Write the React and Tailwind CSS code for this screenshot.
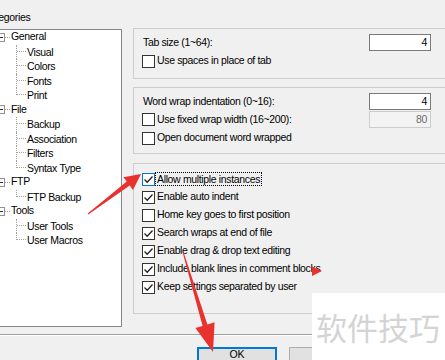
const font = { fontFamily: '"Liberation Sans", Arial, sans-serif' }

function Check({ checked, hot }) {
  return (
    <span className={`w-[13px] h-[13px] shrink-0 bg-white border ${hot ? 'border-[#0078d7]' : 'border-[#333333]'} flex items-center justify-center`}>
      {checked && (
        <svg width="11" height="11" viewBox="0 0 11 11">
          <path d="M1.5 5.5 L4.2 8.2 L9.5 2.5" fill="none" stroke="#222" strokeWidth="1.3" />
        </svg>
      )}
    </span>
  )
}

function CheckRow({ label, checked, hot, focus, h = 'h-[18px]' }) {
  return (
    <div className={`flex items-center gap-[2px] ${h}`}>
      <Check checked={checked} hot={hot} />
      <span className={focus ? 'border border-dotted border-black leading-[12px] px-[1px] -ml-[2px]' : ''}>{label}</span>
    </div>
  )
}

function Field({ label, value, disabled }) {
  return (
    <div className="flex items-center h-[17px] mb-[1px]">
      <span className="w-[227px] pl-[1px]">{label}</span>
      <div className={`w-[62px] h-[17px] border text-right pr-[3px] leading-[15px] ${disabled ? 'border-[#cccccc] bg-[#f3f3f3] text-[#6d6d6d]' : 'border-[#7a7a7a] bg-white text-black'}`}>
        {value}
      </div>
    </div>
  )
}

function Parent({ label }) {
  return (
    <div className="flex items-center h-[14.5px]">
      <span className="w-[15px] shrink-0" />
      <span className="w-[9px] h-[9px] shrink-0 border border-[#919191] bg-white flex items-center justify-center">
        <span className="w-[5px] h-px bg-[#333]" />
      </span>
      <span className="w-[5px] shrink-0 border-b border-dotted border-[#a0a0a0]" />
      <span className="ml-[1px]">{label}</span>
    </div>
  )
}

function Child({ label, last }) {
  return (
    <div className="flex h-[14.5px]">
      <span className="w-[35px] shrink-0" />
      <span className={`w-[10px] shrink-0 flex flex-col ${last ? '' : 'border-l border-dotted border-[#a0a0a0]'}`}>
        <span className={`h-[7px] border-b border-dotted border-[#a0a0a0] ${last ? 'border-l' : ''}`} />
      </span>
      <span className="ml-[1px] leading-[14.5px]">{label}</span>
    </div>
  )
}

const tree = [
  ['General', ['Visual', 'Colors', 'Fonts', 'Print']],
  ['File', ['Backup', 'Association', 'Filters', 'Syntax Type']],
  ['FTP', ['FTP Backup']],
  ['Tools', ['User Tools', 'User Macros']],
]

export default function App() {
  return (
    <div className="w-[445px] h-[360px] bg-[#f0f0f0] overflow-hidden relative text-[10.5px] tracking-[-0.35px] text-black" style={font}>
      <div className="flex h-[334px]">
        {/* Categories tree */}
        <div className="-ml-[20px] w-[142px] shrink-0 pt-[11px]">
          <div className="h-[13px] leading-[13px] pl-[3px]">Categories</div>
          <div className="mt-[5px] h-[298px] border border-[#828790] bg-white">
            {tree.map(([p, kids]) => (
              <div key={p}>
                <Parent label={p} />
                {kids.map((k, i) => (
                  <Child key={k} label={k} last={i === kids.length - 1} />
                ))}
              </div>
            ))}
          </div>
        </div>

        {/* Options */}
        <div className="ml-[11px] w-[330px] shrink-0 pt-[28px] flex flex-col">
          <div className="h-[51px] border border-[#cdcdcd] pl-[8px] pt-[5px]">
            <Field label="Tab size (1~64):" value="4" />
            <CheckRow label="Use spaces in place of tab" />
          </div>
          <div className="mt-[8px] h-[67px] border border-[#cdcdcd] pl-[8px] pt-[5px]">
            <Field label="Word wrap indentation (0~16):" value="4" />
            <div className="flex items-center h-[17px] mb-[1px]">
              <div className="w-[227px] flex items-center gap-[2px]">
                <Check />
                <span>Use fixed wrap width (16~200):</span>
              </div>
              <div className="w-[62px] h-[17px] border border-[#cccccc] bg-[#f3f3f3] text-[#6d6d6d] text-right pr-[3px] leading-[15px]">80</div>
            </div>
            <CheckRow label="Open document word wrapped" />
          </div>
          <div className="mt-[9px] h-[151px] border border-[#cdcdcd] pl-[8px] pt-[6px]">
            <CheckRow label="Allow multiple instances" checked hot focus />
            <CheckRow label="Enable auto indent" checked />
            <CheckRow label="Home key goes to first position" />
            <CheckRow label="Search wraps at end of file" checked />
            <CheckRow label="Enable drag & drop text editing" checked />
            <CheckRow label="Include blank lines in comment blocks" checked />
            <CheckRow label="Keep settings separated by user" checked />
          </div>
        </div>
      </div>

      <div className="h-px bg-[#a0a0a0]" />
      <div className="h-px bg-white" />

      <div className="flex gap-[12px] pl-[197px] pt-[11px]">
        <div className="w-[80px] h-[23px] border-2 border-[#0078d7] bg-[#e1e1e1] flex justify-center leading-[11px] tracking-normal">OK</div>
        <div className="w-[80px] h-[23px] border border-[#adadad] bg-[#e1e1e1]" />
      </div>

      {/* watermark */}
      <div className="absolute left-[312px] top-[293px] right-0 bottom-0 bg-white pl-[4px] pt-[18px]">
        <span className="text-[31px] leading-[31px] tracking-normal text-[#d4d4d4]" style={{ fontFamily: '"Noto Sans CJK SC", sans-serif' }}>软件技巧</span>
      </div>

      {/* red annotation arrows */}
      <svg className="absolute inset-0 pointer-events-none" width="445" height="360">
        <polygon points="88.3,214.4 87.7,213.6 126.7,181.6 123.4,177.2 141,174 133,190 129.7,185.6" fill="#e8322f" />
        <polygon points="183.5,251.9 182.5,252.1 202.6,325.9 195.4,328.1 213,352 214.6,322.3 207.4,324.5" fill="#e8322f" />
        <polygon points="312,266.5 312,276 322,271" fill="#e8322f" />
      </svg>
    </div>
  )
}
